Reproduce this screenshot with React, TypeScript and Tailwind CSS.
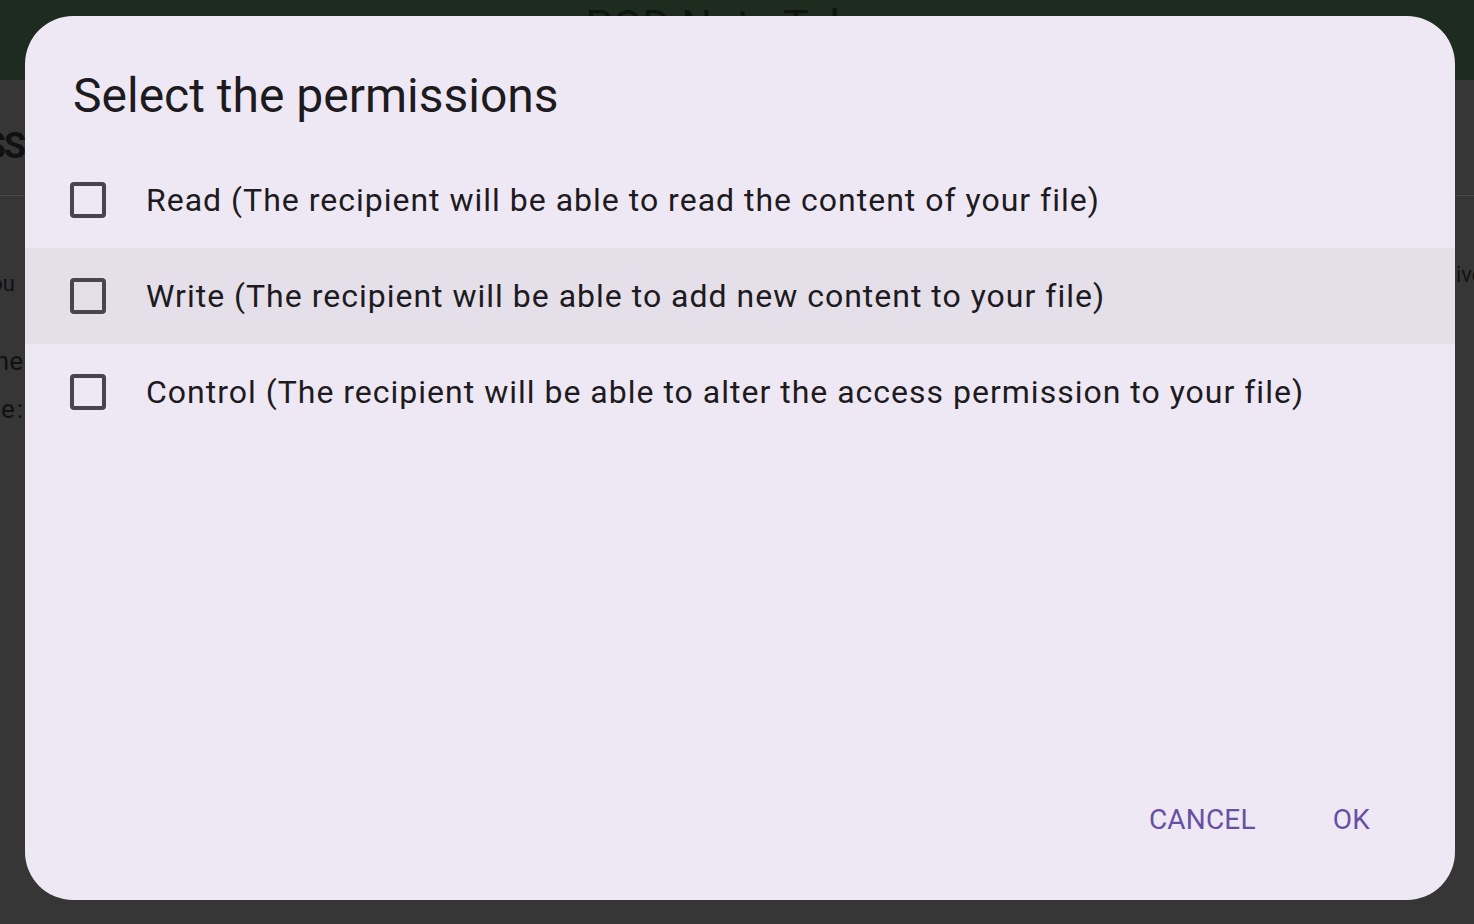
import React from 'react';

const font = { fontFamily: 'Roboto, "Noto Sans", sans-serif' };

const permissions = [
  'Read (The recipient will be able to read the content of your file)',
  'Write (The recipient will be able to add new content to your file)',
  'Control (The recipient will be able to alter the access permission to your file)',
];

const Checkbox: React.FC = () => (
  <div className="w-[36px] h-[36px] shrink-0 rounded-[4px] border-[4px] border-[#49454F]" />
);

const PermissionRow: React.FC<{ label: string; hovered?: boolean }> = ({ label, hovered }) => (
  <div className={`h-[96px] flex items-center pl-[45px] gap-[40px] ${hovered ? 'bg-[#E4DFE9]' : ''}`}>
    <Checkbox />
    <span className="text-[32px] leading-none tracking-[1px] text-[#1D1B20] whitespace-nowrap">{label}</span>
  </div>
);

export default function App() {
  return (
    <div className="relative w-[1474px] h-[924px] overflow-hidden bg-[#363636]" style={font}>
      {/* Page behind the dialog (already dimmed by the scrim) */}
      <div className="h-[80px] bg-[#1E2B1F] flex justify-center">
        <span className="text-[43px] leading-none mt-[4px] text-[#0E150E]">POD Note Taker</span>
      </div>

      <div className="flex">
        {/* left edge of page content, mostly hidden by the dialog */}
        <div className="w-[25px] overflow-hidden flex flex-col">
          <div className="mt-[48px] flex justify-end pr-[1px]">
            <span className="text-[36px] font-bold leading-none tracking-[-2px] text-[#111111] whitespace-nowrap">ACCESS</span>
          </div>
          <div className="mt-[31px] h-[1px] bg-[#4B4B4B]" />
          <div className="mt-[77px] flex justify-end pr-[10px]">
            <span className="text-[22px] leading-none text-[#111111] whitespace-nowrap">you</span>
          </div>
          <div className="mt-[53px] flex justify-end pr-[2px]">
            <span className="text-[26px] leading-none text-[#111111] whitespace-nowrap">one</span>
          </div>
          <div className="mt-[22px] flex justify-end">
            <span className="text-[26px] leading-none tracking-[2px] text-[#111111] whitespace-nowrap">file:</span>
          </div>
        </div>
        <div className="flex-1" />
        {/* right edge of page content */}
        <div className="w-[19px] overflow-hidden flex flex-col">
          <div className="mt-[115px] h-[1px] bg-[#4B4B4B]" />
          <span className="mt-[68px] pl-[1px] text-[22px] leading-none text-[#111111] whitespace-nowrap">ive</span>
        </div>
      </div>

      {/* Dialog */}
      <div className="absolute left-[25px] top-[16px] w-[1430px] h-[884px] rounded-[48px] bg-[#EEE8F4] flex flex-col overflow-hidden">
        <h1 className="pt-[48px] px-[48px] h-[112px] flex items-end text-[48px] leading-[64px] text-[#1D1B20]">
          Select the permissions
        </h1>
        <div className="mt-[24px] flex flex-col">
          {permissions.map((p, i) => (
            <PermissionRow key={p} label={p} hovered={i === 1} />
          ))}
        </div>
        <div className="flex-1" />
        <div className="flex justify-end items-center h-[80px] mb-[40px] pr-[85px] gap-[77px] text-[28px] tracking-[0.2px] text-[#6750A4]">
          <button className="leading-none">CANCEL</button>
          <button className="leading-none">OK</button>
        </div>
      </div>
    </div>
  );
}
